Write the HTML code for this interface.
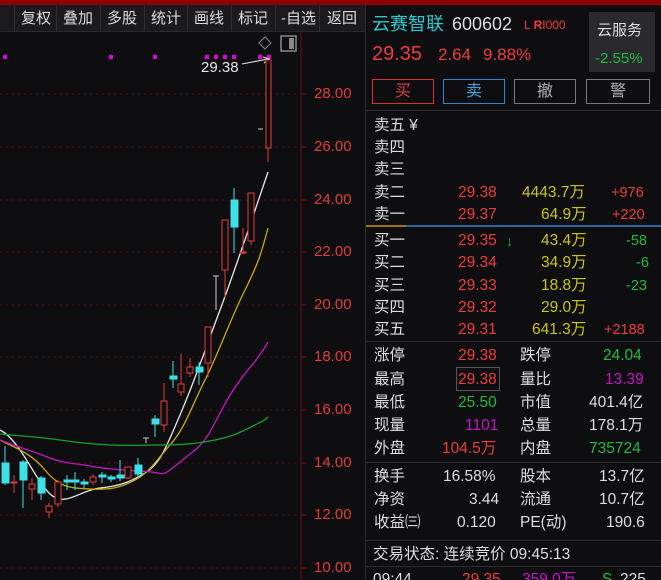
<!DOCTYPE html>
<html><head><meta charset="utf-8"><style>
*{margin:0;padding:0;box-sizing:border-box}
html,body{width:661px;height:580px;overflow:hidden}
body{background:#0e0e11;position:relative;font-family:"Liberation Sans","Noto Sans CJK SC",sans-serif;color:#d8d8d8}
.top{position:absolute;left:0;top:0;width:661px;height:5px;background:#8e0000}
.tb{position:absolute;left:0;top:5px;width:365px;height:27px;background:#1b1b1f;border-bottom:1px solid #2a2a2e}
.tb span{position:absolute;top:3px;font-size:15px;color:#dcdcdc;height:21px;line-height:21px}
.sep{position:absolute;top:5px;width:1px;height:27px;background:#2e2e33}
.ax{position:absolute;left:314px;font-size:15px;color:#e03c3c}
.r{position:absolute;font-size:15.5px;white-space:nowrap;line-height:20px}
.w{color:#dedede}.red{color:#ee3b3b}.y{color:#c9c70e}.g{color:#1fbb3b}.m{color:#c316c3}.c{color:#28c9cf}
.btn{position:absolute;top:79px;width:62px;height:25px;border:1px solid #777;text-align:center;font-size:16px;line-height:23px;color:#b0b0b0}
.hl{position:absolute;left:366px;width:295px;height:1px;background:#2c2c30}
</style></head><body>
<div class="top"></div>
<div class="tb"></div>
<div class="sep" style="left:14px"></div><div class="sep" style="left:56px"></div><div class="sep" style="left:100px"></div><div class="sep" style="left:144px"></div><div class="sep" style="left:187px"></div><div class="sep" style="left:231px"></div><div class="sep" style="left:275px"></div><div class="sep" style="left:319px"></div>
<div class="tb" style="background:none;border:none">
<span style="left:21px">复权</span><span style="left:63px">叠加</span><span style="left:107px">多股</span><span style="left:151px">统计</span><span style="left:194px">画线</span><span style="left:238px">标记</span><span style="left:281px">-自选</span><span style="left:327px">返回</span></div>
<div style="position:absolute;left:365px;top:5px;width:1px;height:575px;background:#2c2c30"></div>

<svg style="position:absolute;left:0;top:0" width="366" height="580">
<g stroke="#5a0b0b" stroke-dasharray="2,4" stroke-width="1">
<line x1="0" y1="94" x2="300" y2="94"/><line x1="0" y1="147" x2="300" y2="147"/><line x1="0" y1="200" x2="300" y2="200"/><line x1="0" y1="252" x2="300" y2="252"/><line x1="0" y1="305" x2="300" y2="305"/><line x1="0" y1="357" x2="300" y2="357"/><line x1="0" y1="410" x2="300" y2="410"/><line x1="0" y1="463" x2="300" y2="463"/><line x1="0" y1="515" x2="300" y2="515"/><line x1="0" y1="568" x2="300" y2="568"/>
</g>
<line x1="301" y1="32" x2="301" y2="580" stroke="#6a0d0d"/>
<g stroke="#6a0d0d"><line x1="301" y1="94" x2="307" y2="94"/><line x1="301" y1="147" x2="307" y2="147"/><line x1="301" y1="200" x2="307" y2="200"/><line x1="301" y1="252" x2="307" y2="252"/><line x1="301" y1="305" x2="307" y2="305"/><line x1="301" y1="357" x2="307" y2="357"/><line x1="301" y1="410" x2="307" y2="410"/><line x1="301" y1="463" x2="307" y2="463"/><line x1="301" y1="515" x2="307" y2="515"/><line x1="301" y1="568" x2="307" y2="568"/></g>
<g fill="#e000e0"><rect x="3" y="55" width="4" height="4"/><rect x="109" y="55" width="4" height="4"/><rect x="153" y="55" width="4" height="4"/><rect x="205" y="55" width="4" height="4"/><rect x="214" y="55" width="4" height="4"/><rect x="223" y="55" width="4" height="4"/><rect x="232" y="55" width="4" height="4"/><rect x="258" y="55" width="4" height="4"/><rect x="267" y="55" width="4" height="4"/></g>
<path d="M265 37 L271 43 L265 49 L259 43 Z" fill="none" stroke="#888"/>
<rect x="281" y="36" width="15" height="15" fill="none" stroke="#888" stroke-width="1.5"/><rect x="289" y="38" width="5" height="11" fill="#888"/>
<text x="201" y="72" fill="#e8e8e8" font-size="15" font-family="Liberation Sans">29.38</text>
<path d="M242 64 L268 59" stroke="#eee"/><path d="M263 57 L269 59 L264 63" stroke="#eee" fill="none"/>
<path d="M0 430 C20 440 35 480 50 494 S80 490 100 488 S130 482 145 473 S165 450 180 415 S205 350 220 310 S245 240 268 172" fill="none" stroke="#e8e8e8" stroke-width="1.3"/>
<path d="M0 440 C15 448 30 452 45 470 S70 488 90 489 S120 488 135 480 S155 462 170 445 S190 410 205 380 S230 320 245 290 S262 250 268 228" fill="none" stroke="#c9ac06" stroke-width="1.3"/>
<path d="M0 440 C15 446 35 452 50 458 S75 463 90 466 S120 470 140 471 S160 475 165 473 S180 462 195 450 S215 420 230 395 S255 365 268 342" fill="none" stroke="#c316c3" stroke-width="1.3"/>
<path d="M0 434 C20 436 40 437 60 440 S90 444 110 445 S140 445 160 445 S195 444 215 440 S245 430 255 425 S265 420 268 417" fill="none" stroke="#16a02c" stroke-width="1.3"/>
<g stroke="#3de0e6" fill="#3de0e6">
<line x1="5" y1="446" x2="5" y2="485"/><rect x="2" y="463" width="7" height="20"/>
<line x1="23" y1="460" x2="23" y2="508"/><rect x="20" y="462" width="7" height="18"/>
<line x1="41" y1="476" x2="41" y2="500"/><rect x="38" y="478" width="7" height="15"/>
<line x1="67" y1="475" x2="67" y2="490"/><rect x="64" y="480" width="7" height="2"/>
<line x1="75" y1="472" x2="75" y2="490"/><rect x="72" y="480" width="7" height="2"/>
<line x1="84" y1="479" x2="84" y2="488"/><rect x="81" y="482" width="7" height="2"/>
<line x1="102" y1="472" x2="102" y2="483"/><rect x="99" y="475" width="7" height="2"/>
<line x1="111" y1="475" x2="111" y2="482"/><rect x="108" y="477" width="7" height="2"/>
<line x1="120" y1="460" x2="120" y2="481"/><rect x="117" y="475" width="7" height="3"/>
<line x1="138" y1="458" x2="138" y2="478"/><rect x="135" y="465" width="7" height="9"/>
<line x1="155" y1="415" x2="155" y2="437"/><rect x="152" y="419" width="7" height="5"/>
<line x1="173" y1="361" x2="173" y2="388"/><rect x="170" y="376" width="7" height="3"/>
<line x1="199" y1="362" x2="199" y2="385"/><rect x="196" y="367" width="7" height="5"/>
<line x1="234" y1="188" x2="234" y2="253"/><rect x="231" y="200" width="7" height="27"/>
</g>
<g stroke="#e63a3a" fill="#0e0e11">
<line x1="14" y1="475" x2="14" y2="493"/><rect x="11" y="482" width="6" height="1"/>
<line x1="32" y1="478" x2="32" y2="500"/><rect x="29" y="484" width="6" height="5"/>
<line x1="49" y1="503" x2="49" y2="518"/><rect x="46" y="506" width="6" height="6"/>
<line x1="58" y1="480" x2="58" y2="507"/><rect x="55" y="482" width="6" height="22"/>
<line x1="93" y1="474" x2="93" y2="485"/><rect x="90" y="477" width="6" height="5"/>
<line x1="128" y1="467" x2="128" y2="479"/><rect x="125" y="467" width="6" height="11"/>
<line x1="164" y1="383" x2="164" y2="432"/><rect x="161" y="401" width="6" height="24"/>
<line x1="181" y1="354" x2="181" y2="396"/><rect x="178" y="384" width="6" height="8"/>
<line x1="190" y1="358" x2="190" y2="377"/><rect x="187" y="367" width="6" height="6"/>
<line x1="208" y1="327" x2="208" y2="377"/><rect x="205" y="327" width="6" height="36"/>
<line x1="225" y1="220" x2="225" y2="298"/><rect x="222" y="220" width="6" height="50"/>
<line x1="243" y1="228" x2="243" y2="254"/><rect x="240" y="252" width="6" height="1"/>
<line x1="251" y1="193" x2="251" y2="245"/><rect x="248" y="193" width="6" height="48"/>
<line x1="268" y1="60" x2="268" y2="162"/><rect x="266" y="60" width="5" height="88"/>
</g>
<g stroke="#ccc"><line x1="146" y1="438" x2="146" y2="443"/><line x1="143" y1="438" x2="149" y2="438"/><line x1="216" y1="276" x2="216" y2="310"/><line x1="213" y1="276" x2="219" y2="276"/><line x1="258" y1="129" x2="263" y2="129"/></g>
</svg>
<div class="ax" style="top:85px">28.00</div><div class="ax" style="top:138px">26.00</div><div class="ax" style="top:191px">24.00</div><div class="ax" style="top:243px">22.00</div><div class="ax" style="top:296px">20.00</div><div class="ax" style="top:348px">18.00</div><div class="ax" style="top:401px">16.00</div><div class="ax" style="top:454px">14.00</div><div class="ax" style="top:506px">12.00</div><div class="ax" style="top:559px">10.00</div>

<div class="r c" style="left:372px;top:13px;font-size:18px;line-height:22px">云赛智联</div>
<div class="r w" style="left:452px;top:13px;font-size:18px;line-height:22px">600602</div>
<div class="r red" style="left:524px;top:15px;font-size:12px">L <b>R</b>I000</div>
<div style="position:absolute;left:589px;top:12px;width:66px;height:60px;background:#2a2a2e"></div>
<div class="r w" style="left:597px;top:21px;font-size:15px">云服务</div>
<div class="r g" style="left:595px;top:49px;font-size:15px">-2.55%</div>
<div class="r red" style="left:372px;top:43px;font-size:20px;line-height:22px">29.35</div>
<div class="r red" style="left:438px;top:45px;font-size:17px">2.64</div>
<div class="r red" style="left:483px;top:45px;font-size:17px">9.88%</div>
<div class="btn" style="left:372px;border-color:#d83030;color:#e03c3c">买</div>
<div class="btn" style="left:443px;border-color:#2f86cc;color:#45a0e0">卖</div>
<div class="btn" style="left:514px">撤</div>
<div class="btn" style="left:586px;width:64px">警</div>
<div class="hl" style="top:110px"></div>
<div class="r w" style="left:374px;top:116px">卖五 ¥</div>
<div class="r w" style="left:374px;top:138px">卖四</div>
<div class="r w" style="left:374px;top:160px">卖三</div>
<div class="r w" style="left:374px;top:183px">卖二</div><div class="r red" style="left:458px;top:183px">29.38</div><div class="r y" style="left:522px;top:183px">4443.7万</div><div class="r red" style="left:611px;top:183px;font-size:14.5px">+976</div>
<div class="r w" style="left:374px;top:205px">卖一</div><div class="r red" style="left:458px;top:205px">29.37</div><div class="r y" style="left:541px;top:205px">64.9万</div><div class="r red" style="left:612px;top:205px;font-size:14.5px">+220</div>
<div style="position:absolute;left:366px;top:225px;width:40px;height:2px;background:#a0701a"></div><div style="position:absolute;left:406px;top:225px;width:255px;height:2px;background:#2a6aa0"></div>
<div class="r w" style="left:374px;top:231px">买一</div><div class="r red" style="left:458px;top:231px">29.35</div><div class="r g" style="left:506px;top:231px;font-size:14px;font-weight:bold">&#8595;</div><div class="r y" style="left:541px;top:231px">43.4万</div><div class="r g" style="left:626px;top:231px;font-size:14.5px">-58</div>
<div class="r w" style="left:374px;top:253px">买二</div><div class="r red" style="left:458px;top:253px">29.34</div><div class="r y" style="left:541px;top:253px">34.9万</div><div class="r g" style="left:636px;top:253px;font-size:14.5px">-6</div>
<div class="r w" style="left:374px;top:276px">买三</div><div class="r red" style="left:458px;top:276px">29.33</div><div class="r y" style="left:541px;top:276px">18.8万</div><div class="r g" style="left:626px;top:276px;font-size:14.5px">-23</div>
<div class="r w" style="left:374px;top:298px">买四</div><div class="r red" style="left:458px;top:298px">29.32</div><div class="r y" style="left:541px;top:298px">29.0万</div>
<div class="r w" style="left:374px;top:320px">买五</div><div class="r red" style="left:458px;top:320px">29.31</div><div class="r y" style="left:532px;top:320px">641.3万</div><div class="r red" style="left:604px;top:320px;font-size:14.5px">+2188</div>
<div class="hl" style="top:341px"></div>
<div class="r w" style="left:374px;top:346px">涨停</div><div class="r red" style="left:458px;top:346px">29.38</div><div class="r w" style="left:520px;top:346px">跌停</div><div class="r g" style="left:603px;top:346px">24.04</div>
<div class="r w" style="left:374px;top:370px">最高</div><div style="position:absolute;left:456px;top:367px;width:44px;height:24px;border:1px solid #555"></div><div class="r red" style="left:458px;top:370px">29.38</div><div class="r w" style="left:520px;top:370px">量比</div><div class="r m" style="left:605px;top:370px">13.39</div>
<div class="r w" style="left:374px;top:393px">最低</div><div class="r g" style="left:458px;top:393px">25.50</div><div class="r w" style="left:520px;top:393px">市值</div><div class="r w" style="left:589px;top:393px">401.4亿</div>
<div class="r w" style="left:374px;top:416px">现量</div><div class="r m" style="left:465px;top:416px">1101</div><div class="r w" style="left:520px;top:416px">总量</div><div class="r w" style="left:589px;top:416px">178.1万</div>
<div class="r w" style="left:374px;top:439px">外盘</div><div class="r red" style="left:442px;top:439px">104.5万</div><div class="r w" style="left:520px;top:439px">内盘</div><div class="r g" style="left:589px;top:439px">735724</div>
<div class="hl" style="top:462px"></div>
<div class="r w" style="left:374px;top:467px">换手</div><div class="r w" style="left:443px;top:467px">16.58%</div><div class="r w" style="left:520px;top:467px">股本</div><div class="r w" style="left:599px;top:467px">13.7亿</div>
<div class="r w" style="left:374px;top:490px">净资</div><div class="r w" style="left:469px;top:490px">3.44</div><div class="r w" style="left:520px;top:490px">流通</div><div class="r w" style="left:599px;top:490px">10.7亿</div>
<div class="r w" style="left:374px;top:513px">收益㈢</div><div class="r w" style="left:457px;top:513px">0.120</div><div class="r w" style="left:520px;top:513px">PE(动)</div><div class="r w" style="left:606px;top:513px">190.6</div>
<div class="hl" style="top:540px"></div>
<div class="r w" style="left:373px;top:545px">交易状态: 连续竞价 09:45:13</div>
<div class="hl" style="top:566px"></div>
<div class="r w" style="left:373px;top:570px">09:44</div><div class="r red" style="left:462px;top:570px">29.35</div><div class="r m" style="left:522px;top:570px">359.0万</div><div class="r g" style="left:602px;top:570px">S</div><div class="r w" style="left:620px;top:570px">225</div>
</body></html>
